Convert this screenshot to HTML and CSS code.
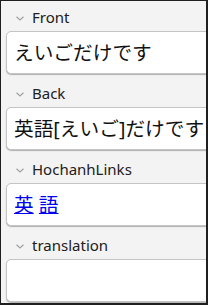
FILE: index.html
```html
<!DOCTYPE html>
<html>
<head>
<meta charset="utf-8">
<link rel="stylesheet" href="styles.css">
</head>
<body>
<div class="frame">
  <div class="fields">
    <div class="field">
      <div class="label"><span class="chev"><svg width="8" height="5" viewBox="0 0 8 5"><path d="M0.5 0.8 L4 4 L7.5 0.8" fill="none" stroke="#a0a0a0" stroke-width="1.2"/></svg></span><span class="name">Front</span></div>
      <div class="box">えいごだけです</div>
    </div>
    <div class="field">
      <div class="label"><span class="chev"><svg width="8" height="5" viewBox="0 0 8 5"><path d="M0.5 0.8 L4 4 L7.5 0.8" fill="none" stroke="#a0a0a0" stroke-width="1.2"/></svg></span><span class="name">Back</span></div>
      <div class="box">英語[えいご]だけです</div>
    </div>
    <div class="field">
      <div class="label"><span class="chev"><svg width="8" height="5" viewBox="0 0 8 5"><path d="M0.5 0.8 L4 4 L7.5 0.8" fill="none" stroke="#a0a0a0" stroke-width="1.2"/></svg></span><span class="name">HochanhLinks</span></div>
      <div class="box"><a href="#">英</a> <a href="#">語</a></div>
    </div>
    <div class="field">
      <div class="label"><span class="chev"><svg width="8" height="5" viewBox="0 0 8 5"><path d="M0.5 0.8 L4 4 L7.5 0.8" fill="none" stroke="#a0a0a0" stroke-width="1.2"/></svg></span><span class="name">translation</span></div>
      <div class="box"></div>
    </div>
  </div>
</div>
</body>
</html>
```
FILE: styles.css
```css
html, body {
  margin: 0;
  padding: 0;
}
body {
  width: 208px;
  height: 305px;
  overflow: hidden;
  font-family: "Noto Sans", "Noto Sans CJK JP", sans-serif;
}
.frame {
  box-sizing: border-box;
  width: 208px;
  height: 305px;
  background: #f3f3f3;
  border-style: solid;
  border-color: #1f1f1f;
  border-width: 1px 2px 2px 1px;
  overflow: hidden;
}
.fields {
  display: flex;
  flex-direction: column;
  gap: 5px;
  padding: 2px 0 0 5px;
}
.field {
  display: flex;
  flex-direction: column;
}
.label {
  height: 28px;
  display: flex;
  align-items: center;
  font-size: 15px;
  color: #202020;
}
.chev {
  display: flex;
  width: 26px;
  padding-left: 10px;
  box-sizing: border-box;
  padding-top: 2px;
}
.name {
  line-height: 20px;
}
.box {
  box-sizing: border-box;
  width: 230px;
  height: 43px;
  background: #fff;
  border: 1px solid #c4c4c4;
  border-radius: 5px;
  box-shadow: 0 1px 1px #b0b0b0;
  padding: 0 7px;
  font-family: "Noto Sans", "Noto Sans CJK JP", sans-serif;
  font-size: 19.7px;
  line-height: 41px;
  color: #111;
  white-space: nowrap;
}
.box a {
  color: #0000ee;
  text-decoration: underline;
}
```
